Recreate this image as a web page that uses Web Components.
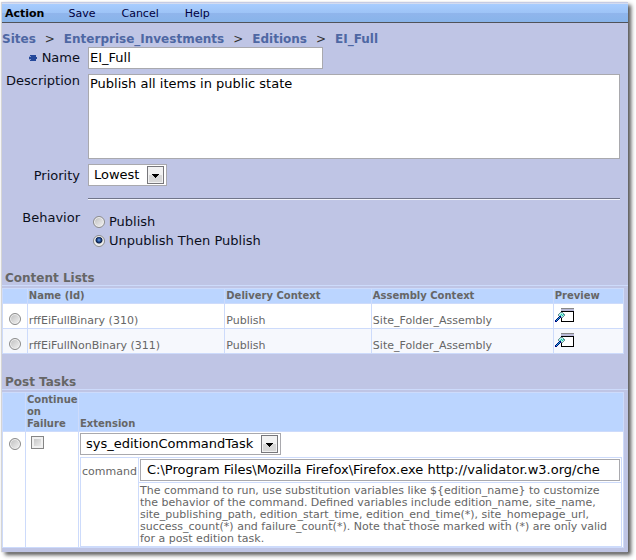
<!DOCTYPE html>
<html lang="en">
<head>
<meta charset="utf-8">
<title>Edition EI_Full</title>
<style>
  html { background: #fff; }
  body {
    margin: 0;
    padding: 2px 8px 8px 2px;
    font-family: Verdana, "DejaVu Sans", sans-serif;
    font-size: 13px;
    color: #0b0f1c;
    --panel: #bfc5e5;
    --line: #cddbfb;
    --head: #bbd5ff;
    --muted: #666;
    --field: #a9a9ae;
  }
</style>
</head>
<body>
<edition-page>
  <menu-bar heading="Action">
    <menu-item>Save</menu-item>
    <menu-item>Cancel</menu-item>
    <menu-item>Help</menu-item>
  </menu-bar>
  <bread-crumbs>
    <crumb-link>Sites</crumb-link>
    <crumb-link>Enterprise_Investments</crumb-link>
    <crumb-link>Editions</crumb-link>
    <crumb-link>EI_Full</crumb-link>
  </bread-crumbs>
  <edition-form></edition-form>
  <page-section heading="Content Lists"><content-lists></content-lists></page-section>
  <page-section heading="Post Tasks"><post-tasks></post-tasks></page-section>
</edition-page>

<script>
const controls = `
  * { box-sizing: border-box; }
  input, textarea, select, button { font: inherit; color: #000; margin: 0; }
  input[type=text], textarea, select {
    border: 1px solid var(--field); border-radius: 0; background: #fff; outline: 0;
  }
  input[type=text] { height: 22px; padding: 0 1px 1px; display: block; }
  input[type=radio], input[type=checkbox] {
    appearance: none; width: 12px; height: 12px; flex: none;
    border: 1px solid #8c8c8c;
    background: linear-gradient(135deg, #bdbdbd, #f4f4f4);
    box-shadow: inset 0 0 0 1px #f2f2f2;
  }
  input[type=radio] { border-radius: 50%; }
  input[type=radio]:checked {
    background: radial-gradient(circle at 5px 4px, #6fa6e8 0, #173f86 2px, #0d2045 3px, #e9e9e9 4px);
  }
  input[type=checkbox] { width: 13px; height: 13px; border-color: #858585; box-shadow: inset 0 0 0 2px #f0f0f0; }
`;

function define(name, html) {
  customElements.define(name, class extends HTMLElement {
    constructor() {
      super();
      this.attachShadow({ mode: "open" });
    }
    connectedCallback() {
      const attr = key => this.getAttribute(key) || "";
      this.shadowRoot.innerHTML = typeof html === "function" ? html(attr) : html;
    }
  });
}

define("edition-page", `
  <style>
    :host {
      display: flow-root; background: var(--panel); padding-bottom: 4px;
      border-top: 1px solid #c5cbe4;
      box-shadow: -1px 0 1px #d5d5d5, 3px 3px 4px #555;
    }
  </style><slot></slot>`);

define("menu-bar", a => `
  <style>
    :host {
      display: flex; align-items: center; gap: 26px; height: 20px; box-sizing: border-box;
      padding: 0 3px; border-top: 1px solid #d4dcf0; border-bottom: 1px solid #50535a;
      background: linear-gradient(#a8cdff, #9dc3f6 50%, #90b5ec 50%, #88b4ea);
    }
    strong { font-size: 11px; color: #000; margin-right: -2px; }
  </style>
  <strong>${a("heading")}</strong><slot></slot>`);

define("menu-item", `
  <style>
    :host { display: block; }
    button { display: block; border: 0; padding: 0; background: none; font: inherit; font-size: 11px; color: #000040; }
  </style><button type="button"><slot></slot></button>`);

define("bread-crumbs", `
  <style>
    :host { display: flex; gap: 9px; font-size: 12px; font-weight: bold; line-height: 16px; padding: 8px 0 0; }
  </style><slot></slot>`);

define("crumb-link", `
  <style>
    :host { display: flex; gap: 9px; }
    :host(:not(:last-child))::after { content: ">"; color: #333; font-weight: normal; }
    a { color: #4e67a3; text-decoration: none; }
  </style><a href="#"><slot></slot></a>`);

define("drop-down", a => `
  <style>
    ${controls}
    :host { display: inline-grid; grid-template-columns: 1fr 20px; align-items: center; vertical-align: top; }
    select { appearance: none; grid-area: 1 / 1 / 2 / 3; height: 22px; padding: 0 26px 0 5px; line-height: 20px; }
    svg { grid-area: 1 / 2; pointer-events: none; z-index: 1; }
  </style>
  <select aria-label="${a("label")}"><option>${a("value")}</option></select>
  <svg width="18" height="18" viewBox="0 0 18 18" aria-hidden="true">
    <rect x=".5" y=".5" width="16" height="17" fill="#f2f2f2" stroke="#77777b"/>
    <rect x="2" y="9" width="13" height="7" fill="#d8d8d8"/>
    <path d="M5 8h7v1h-1v1h-1v1H9v1H8v-1H7v-1H6V9H5z" fill="#000"/>
  </svg>`);

define("edition-form", `
  <style>
    ${controls}
    :host {
      display: grid; grid-template-columns: 78px 1fr; column-gap: 8px;
      padding: 0 8px 0 0; line-height: 16px;
    }
    .label { text-align: right; }
    .name { display: flex; justify-content: flex-end; align-items: center; gap: 5px; }
    #name { width: 44.2%; }
    textarea { display: block; width: 100%; height: 85px; margin: 5px 0; padding: 1px; resize: none; line-height: 16px; }
    .description, .priority { padding-top: 4px; }
    hr { grid-column: 2; width: 100%; margin: 12px 0; border: 0; border-top: 1px solid #70758a; border-bottom: 1px solid #f1f3fb; }
    .behavior { margin-top: -2px; }
    fieldset { border: 0; margin: 0; padding: 0 0 0 5px; }
    .option { display: flex; align-items: center; gap: 4px; height: 19px; }
    .option label { padding-top: 1px; }
  </style>
  <label class="label name" for="name">
    <svg width="8" height="8" viewBox="0 0 8 8" aria-hidden="true" shape-rendering="crispEdges">
      <path d="M1 1h6v2h1v2H7v2H1V5H0V3h1z" fill="#24489a"/>
      <path d="M0 2h2v1H0zM0 5h2v1H0z" fill="#8b9cc9"/>
    </svg>Name</label>
  <input id="name" type="text" value="EI_Full">
  <label class="label description" for="description">Description</label>
  <textarea id="description">Publish all items in public state</textarea>
  <span class="label priority">Priority</span>
  <div><drop-down label="Priority" value="Lowest"></drop-down></div>
  <hr>
  <span class="label behavior" id="behavior">Behavior</span>
  <fieldset aria-labelledby="behavior">
    <div class="option"><input type="radio" name="behavior" id="publish"><label for="publish">Publish</label></div>
    <div class="option"><input type="radio" name="behavior" id="both" checked><label for="both">Unpublish Then Publish</label></div>
  </fieldset>`);

define("page-section", a => `
  <style>
    :host { display: block; padding-top: 21px; color: var(--muted); }
    h2 { margin: 0 0 2px; padding-left: 3px; font-size: 12px; line-height: 14px; border-bottom: 1px solid var(--line); }
    ::slotted(*) { margin-right: 4px; }
  </style>
  <h2>${a("heading")}</h2><slot></slot>`);

const tables = `
  :host { display: block; font-size: 11px; line-height: 12px; color: var(--muted); }
  table { width: 100%; border-collapse: collapse; background: #fff; table-layout: fixed; }
  th { background: var(--head); text-align: left; font-size: 10px; }
  th, td { border: 1px solid var(--line); padding: 1px; }
`;

define("preview-button", `
  <style>
    :host { display: block; }
    button { display: block; border: 0; padding: 0; background: none; }
    svg { display: block; }
  </style>
  <button type="button" aria-label="Preview">
    <svg width="20" height="16" viewBox="0 0 20 16" shape-rendering="crispEdges">
      <path d="M6 0h13v14H6z" fill="#fff"/>
      <path d="M6 0h13v1H6zM6 0h1v5H6z" fill="#888"/>
      <path d="M6 1h13v2H6z" fill="#b9b9d6"/>
      <path d="M6 3h13v1H6zM18 3h1v11h-1zM6 13h13v1H6zM6 10h1v4H6z" fill="#000"/>
      <path d="M5 4h3v1h1v1h1v2H9v1H8v1H5V9H4V8H3V6h1V5h1z" fill="#6b8f96"/>
      <path d="M5 5h3v1h1v2H8v1H5V8H4V6h1z" fill="#a9f3e3"/>
      <path d="M6 6h1v1H6zM8 6h1v1H8zM7 7h1v1H7zM5 7h1v1H5z" fill="#22b9ad"/>
      <path d="M4 8h2v2H5v1H4v1H3v1H2v1H0v-2h1v-1h1v-1h1V9h1z" fill="#000080"/>
      <path d="M4 9h1v1H4zM3 10h1v1H3zM2 11h1v1H2zM1 12h1v1H1z" fill="#20c0c8"/>
    </svg>
  </button>`);

define("content-lists", () => {
  const row = id => `
    <tr>
      <td><input type="radio" name="list" aria-label="${id}"></td>
      <td>${id}</td><td>Publish</td><td>Site_Folder_Assembly</td>
      <td class="preview"><preview-button></preview-button></td>
    </tr>`;
  return `
  <style>
    ${controls} ${tables}
    td { height: 25px; vertical-align: bottom; }
    td:first-child { vertical-align: middle; }
    td input { display: block; margin: 6px 0 0 5px; }
    tr:nth-child(even) td { background: #f6f8fd; }
    td.preview { vertical-align: top; padding-top: 4px; }
  </style>
  <table>
    <colgroup><col style="width:4%"><col style="width:31.8%"><col style="width:23.6%"><col style="width:29.3%"><col></colgroup>
    <thead><tr><th></th><th>Name (Id)</th><th>Delivery Context</th><th>Assembly Context</th><th>Preview</th></tr></thead>
    <tbody>${row("rffEiFullBinary (310)")}${row("rffEiFullNonBinary (311)")}</tbody>
  </table>`;
});

define("post-tasks", `
  <style>
    ${controls} ${tables}
    th { vertical-align: bottom; }
    td { vertical-align: top; }
    .pick input { display: block; margin: 5px 0 0 5px; }
    .pick.tick input { margin: 3px 0 0 4px; }
    .task { padding: 1px 1px 0; }
    .task drop-down { font-size: 13px; color: #000; margin-bottom: 2px; }
    .task td { padding: 1px; }
    .task .key { padding-top: 8px; }
    #command { width: 100%; font-size: 13px; padding-left: 6px; padding-right: 0; }
    .task .help td { height: 64px; padding-top: 2px; }
  </style>
  <table>
    <colgroup><col style="width:23px"><col style="width:53px"><col></colgroup>
    <thead><tr><th></th><th>Continue on Failure</th><th>Extension</th></tr></thead>
    <tbody><tr>
      <td class="pick"><input type="radio" name="task" aria-label="Select task"></td>
      <td class="pick tick"><input type="checkbox" aria-label="Continue on failure"></td>
      <td class="task">
        <drop-down label="Extension" value="sys_editionCommandTask"></drop-down>
        <table>
          <colgroup><col style="width:58px"><col></colgroup>
          <tbody>
            <tr><td class="key" rowspan="2"><label for="command">command</label></td>
              <td><input id="command" type="text" value="C:\\Program Files\\Mozilla Firefox\\Firefox.exe http://validator.w3.org/che"></td></tr>
            <tr class="help"><td>The command to run, use substitution variables like \${edition_name} to customize the behavior of the command. Defined variables include edition_name, site_name, site_publishing_path, edition_start_time, edition_end_time(*), site_homepage_url, success_count(*) and failure_count(*). Note that those marked with (*) are only valid for a post edition task.</td></tr>
          </tbody>
        </table>
      </td>
    </tr></tbody>
  </table>`);
</script>
</body>
</html>
